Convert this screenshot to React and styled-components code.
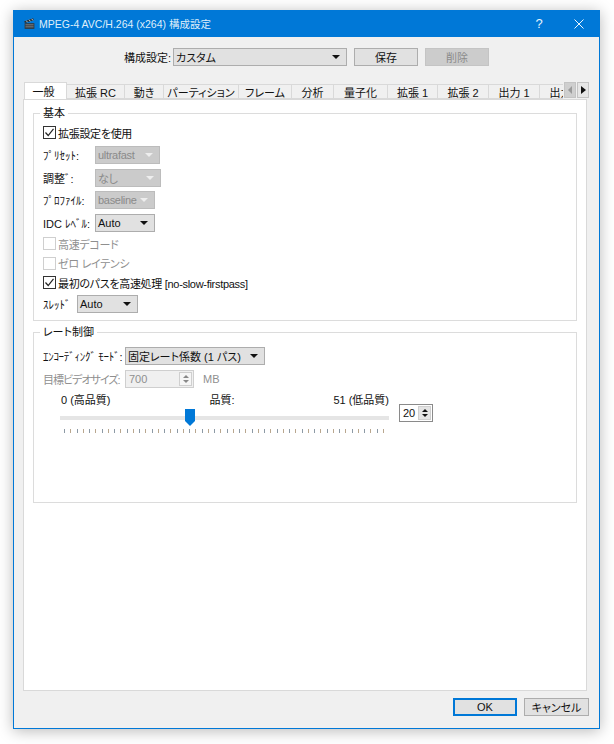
import React from 'react'
import styled, { createGlobalStyle } from 'styled-components'

const Global = createGlobalStyle`
  html, body { margin: 0; background: #fff; }
  body {
    font-family: "Liberation Sans", "Noto Sans CJK JP", sans-serif;
    font-size: 11px;
    font-feature-settings: "palt";
    color: #111;
  }
  * { box-sizing: border-box; }
`

const Page = styled.div`
  width: 614px;
  height: 744px;
  padding: 10px 14px 15px 13px;
  overflow: hidden;
`

const Win = styled.div`
  height: 719px;
  display: flex;
  flex-direction: column;
  background: #f0f0f0;
  border: 1px solid #0078d7;
  border-top: 0;
  box-shadow: 0 2px 14px rgba(0, 0, 0, 0.28);
`

const TitleBar = styled.div`
  flex: 0 0 27px;
  display: flex;
  align-items: center;
  background: #0078d7;
  color: #dfeefa;
  padding-left: 9px;
  font-size: 10.5px;
`

const TitleText = styled.span`
  flex: 1;
  margin-left: 3px;
`

const TitleBtn = styled.div`
  width: 40px;
  display: flex;
  justify-content: center;
  color: #e8f3fc;
  font-size: 13px;
`

const TopRow = styled.div`
  display: flex;
  align-items: center;
  height: 18px;
  margin-top: 11px;
  padding-left: 110px;
`

const TopLabel = styled.span`
  width: 49px;
  white-space: nowrap;
`

const Combo = styled.div`
  width: ${p => p.$w}px;
  height: ${p => p.$h || 18}px;
  display: flex;
  align-items: center;
  justify-content: space-between;
  padding: 0 6px 0 2px;
  flex: none;
  white-space: nowrap;
  letter-spacing: ${p => (p.$disabled ? '-0.3px' : 0)};
  background: ${p => (p.$disabled ? '#cbcbcb' : '#e1e1e1')};
  border: 1px solid ${p => (p.$disabled ? '#bcbcbc' : '#adadad')};
  color: ${p => (p.$disabled ? '#8a8a8a' : '#111')};
`

const Arrow = styled.i`
  width: 0;
  height: 0;
  border-left: 4px solid transparent;
  border-right: 4px solid transparent;
  border-top: 4px solid ${p => (p.$disabled ? '#eeeeee' : '#111')};
`

const Btn = styled.div`
  width: ${p => p.$w || 64}px;
  height: 18px;
  margin-left: ${p => p.$ml || 0}px;
  display: flex;
  align-items: center;
  justify-content: center;
  flex: none;
  background: ${p => (p.$disabled ? '#cccccc' : '#e1e1e1')};
  border: ${p => (p.$primary ? '2px solid #0078d7' : `1px solid ${p.$disabled ? '#c4c4c4' : '#adadad'}`)};
  color: ${p => (p.$disabled ? '#8a8a8a' : '#111')};
`

const TabWrap = styled.div`
  position: relative;
  height: 17px;
  margin: 16px 10px 0 10px;
`

const TabStrip = styled.div`
  display: flex;
  align-items: flex-end;
  height: 17px;
  width: 539px;
  overflow: hidden;
`

const Tab = styled.div`
  flex: 0 0 ${p => p.$w}px;
  height: ${p => (p.$active ? 17 : 15)}px;
  display: flex;
  align-items: center;
  justify-content: center;
  padding-right: ${p => (p.$active ? 4 : 0)}px;
  white-space: nowrap;
  background: ${p => (p.$active ? '#fff' : '#f0f0f0')};
  border: 1px solid #d9d9d9;
  border-left: ${p => (p.$active ? '1px solid #d9d9d9' : 0)};
  border-bottom: ${p => (p.$active ? 0 : '1px solid #d9d9d9')};
`

const Scroller = styled.div`
  position: absolute;
  right: 0;
  top: 0;
  display: flex;
  gap: 1px;
`

const ScrollBtn = styled.div`
  width: 12px;
  height: 16px;
  display: flex;
  align-items: center;
  justify-content: center;
  background: ${p => (p.$off ? '#cfcfcf' : '#e6e6e6')};
  border: 1px solid #c4c4c4;
`

const TriLeft = styled.i`
  border-top: 4px solid transparent;
  border-bottom: 4px solid transparent;
  border-right: 4px solid #9a9a9a;
`

const TriRight = styled.i`
  border-top: 4px solid transparent;
  border-bottom: 4px solid transparent;
  border-left: 5px solid #111;
`

const Panel = styled.div`
  flex: 1;
  margin: 0 12px 0 9px;
  padding: 6px 9px 0;
  background: #fff;
  border: 1px solid #d9d9d9;
`

const Group = styled.fieldset`
  margin: 0 0 4px;
  padding: ${p => p.$pt}px 9px 0;
  height: ${p => p.$h}px;
  border: 1px solid #dcdcdc;
`

const Legend = styled.legend`
  padding: 0 3px;
  margin-left: -3px;
  line-height: 15px;
`

const Row = styled.div`
  display: flex;
  align-items: center;
  height: ${p => p.$h}px;
`

const Label = styled.span`
  width: ${p => p.$w}px;
  flex: none;
  white-space: nowrap;
  letter-spacing: ${p => p.$ls || 0}px;
  color: ${p => (p.$off ? '#8f8f8f' : '#111')};
`

const CheckBox = styled.span`
  width: 13px;
  height: 13px;
  flex: none;
  margin-right: 2px;
  display: flex;
  background: #fff;
  border: 1px solid ${p => (p.$off ? '#cfcfcf' : '#333')};
`

const CheckText = styled.span`
  color: ${p => (p.$off ? '#8f8f8f' : '#111')};
  white-space: nowrap;
  letter-spacing: -0.3px;
`

const NumBox = styled.div`
  width: ${p => p.$w}px;
  height: 18px;
  display: flex;
  align-items: center;
  justify-content: space-between;
  padding: 0 1px 0 3px;
  flex: none;
  background: ${p => (p.$off ? '#f0f0f0' : '#fff')};
  border: 1px solid ${p => (p.$off ? '#cfcfcf' : '#8a8a8a')};
  color: ${p => (p.$off ? '#8f8f8f' : '#111')};
`

const Spin = styled.div`
  width: 13px;
  height: 14px;
  display: flex;
  flex-direction: column;
  align-items: center;
  justify-content: center;
  gap: 2px;
  background: ${p => (p.$off ? '#f6f6f6' : '#e4e4e4')};
  border: 1px solid #cfcfcf;
`

const Up = styled.i`
  border-left: 3px solid transparent;
  border-right: 3px solid transparent;
  border-bottom: 3px solid ${p => (p.$off ? '#888' : '#111')};
`

const Down = styled.i`
  border-left: 3px solid transparent;
  border-right: 3px solid transparent;
  border-top: 3px solid ${p => (p.$off ? '#888' : '#111')};
`

const Unit = styled.span`
  margin-left: 9px;
  color: #8f8f8f;
`

const SliderArea = styled.div`
  display: flex;
  align-items: flex-start;
  margin-top: 2px;
`

const SliderCol = styled.div`
  width: 329px;
  margin-left: 17px;
`

const Scale = styled.div`
  display: flex;
  justify-content: space-between;
  padding: 0 0 0 1px;
  height: 17px;
  line-height: 17px;
`

const Track = styled.div`
  position: relative;
  height: 4px;
  margin-top: 7px;
  background: #e5e5e5;
`

const Thumb = styled.svg`
  position: absolute;
  left: 125px;
  top: -7px;
`

const Ticks = styled.div`
  display: flex;
  justify-content: space-between;
  margin: 9px 5px 0 4px;
`

const Tick = styled.i`
  width: 1px;
  height: 4px;
  background: ${p => (p.$odd ? '#b9a78f' : '#8d9aa5')};
`

const SpinWrap = styled.div`
  margin: 12px 0 0 10px;
`

const Footer = styled.div`
  flex: 0 0 37px;
  display: flex;
  justify-content: flex-end;
  padding: 7px 10px 0 0;
`

const tabs = [
  ['一般', 43], ['拡張 RC', 58], ['動き', 39], ['パーティション', 75], ['フレーム', 53], ['分析', 42],
  ['量子化', 54], ['拡張 1', 50], ['拡張 2', 51], ['出力 1', 51], ['出力 2', 51],
]

const Check = ({ off, on, h, children }) => (
  <Row $h={h}>
    <CheckBox $off={off}>
      {on && (
        <svg width="11" height="11" viewBox="0 0 11 11">
          <path d="M1.5 5.5 L4.2 8.5 L9.5 1.8" fill="none" stroke="#222" strokeWidth="1.2" />
        </svg>
      )}
    </CheckBox>
    <CheckText $off={off}>{children}</CheckText>
  </Row>
)

const Select = ({ w, disabled, children }) => (
  <Combo $w={w} $disabled={disabled}>
    <span>{children}</span>
    <Arrow $disabled={disabled} />
  </Combo>
)

export default function App() {
  return (
    <Page>
      <Global />
      <Win>
        <TitleBar>
          <svg width="13" height="14" viewBox="0 0 16 16">
            <path d="M2 7 H14 V14 H2 Z" fill="#33383d" />
            <path d="M1.5 4.5 L12.5 1 L13.3 3.4 L2.3 6.9 Z" fill="#2b2f33" />
            <path d="M4 3.8 L5.5 5.8 M7.5 2.7 L9 4.7 M10.8 1.7 L12.2 3.6" stroke="#e8e8e8" strokeWidth="1" />
            <path d="M3 9 H13 M3 11.5 H13" stroke="#8c9298" strokeWidth="1" />
          </svg>
          <TitleText>MPEG-4 AVC/H.264 (x264) 構成設定</TitleText>
          <TitleBtn>?</TitleBtn>
          <TitleBtn>
            <svg width="10" height="10" viewBox="0 0 10 10">
              <path d="M0.5 0.5 L9.5 9.5 M9.5 0.5 L0.5 9.5" stroke="#eef6fc" strokeWidth="1" />
            </svg>
          </TitleBtn>
        </TitleBar>

        <TopRow>
          <TopLabel>構成設定:</TopLabel>
          <Select w={174}>カスタム</Select>
          <Btn $ml={7}>保存</Btn>
          <Btn $ml={7} $disabled>削除</Btn>
        </TopRow>

        <TabWrap>
          <TabStrip>
            {tabs.map(([label, w], i) => (
              <Tab key={label} $w={w} $active={i === 0}>{label}</Tab>
            ))}
          </TabStrip>
          <Scroller>
            <ScrollBtn $off><TriLeft /></ScrollBtn>
            <ScrollBtn><TriRight /></ScrollBtn>
          </Scroller>
        </TabWrap>

        <Panel>
          <Group $h={215} $pt={1}>
            <Legend>基本</Legend>
            <Check on h={21}>拡張設定を使用</Check>
            <Row $h={23}><Label $w={52}>ﾌﾟﾘｾｯﾄ:</Label><Select w={65} disabled>ultrafast</Select></Row>
            <Row $h={23}><Label $w={52}>調整ﾞ:</Label><Select w={66} disabled>なし</Select></Row>
            <Row $h={22}><Label $w={52}>ﾌﾟﾛﾌｧｲﾙ:</Label><Select w={60} disabled>baseline</Select></Row>
            <Row $h={23}><Label $w={52}>IDC ﾚﾍﾞﾙ:</Label><Select w={60}>Auto</Select></Row>
            <Check off h={19.5}>高速デコード</Check>
            <Check off h={19.5}>ゼロ レイテンシ</Check>
            <Check on h={19}>最初のパスを高速処理 [no-slow-firstpass]</Check>
            <Row $h={23}><Label $w={34}>ｽﾚｯﾄﾞ</Label><Select w={61}>Auto</Select></Row>
          </Group>

          <Group $h={178} $pt={5}>
            <Legend>レート制御</Legend>
            <Row $h={22}>
              <Label $w={82} $ls={-0.3}>ｴﾝｺｰﾃﾞｨﾝｸﾞ ﾓｰﾄﾞ:</Label>
              <Select w={140}>固定レート係数 (1 パス)</Select>
            </Row>
            <Row $h={23}>
              <Label $w={82} $off $ls={-1}>目標ビデオサイズ:</Label>
              <NumBox $w={69} $off>700<Spin $off><Up $off /><Down $off /></Spin></NumBox>
              <Unit>MB</Unit>
            </Row>
            <SliderArea>
              <SliderCol>
                <Scale>
                  <span>0 (高品質)</span>
                  <span>品質:</span>
                  <span>51 (低品質)</span>
                </Scale>
                <Track>
                  <Thumb width="10" height="17" viewBox="0 0 10 17">
                    <path d="M0 0 H10 V12 L5 17 L0 12 Z" fill="#0078d7" />
                  </Thumb>
                </Track>
                <Ticks>
                  {Array.from({ length: 52 }, (_, i) => <Tick key={i} $odd={i % 2 === 1} />)}
                </Ticks>
              </SliderCol>
              <SpinWrap>
                <NumBox $w={34}>20<Spin><Up /><Down /></Spin></NumBox>
              </SpinWrap>
            </SliderArea>
          </Group>
        </Panel>

        <Footer>
          <Btn $w={64} $primary>OK</Btn>
          <Btn $w={65} $ml={7}>キャンセル</Btn>
        </Footer>
      </Win>
    </Page>
  )
}
